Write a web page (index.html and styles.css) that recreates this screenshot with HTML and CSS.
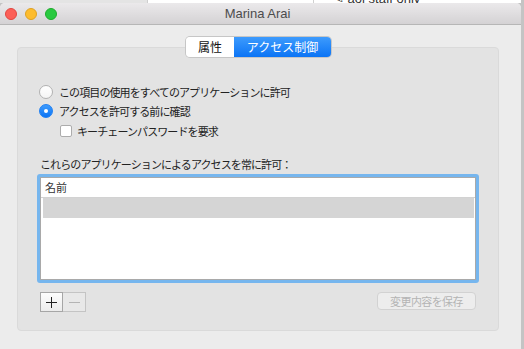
FILE: index.html
```html
<!DOCTYPE html>
<html lang="ja">
<head>
  <meta charset="UTF-8">
  <title>Marina Arai</title>
  <link rel="stylesheet" href="styles.css">
</head>
<body>
  <div class="desk">
    <div class="desk-left"></div>
    <div class="desk-mid"></div>
    <div class="desk-text">✎ aol staff only</div>
  </div>

  <div class="window">
    <div class="titlebar">
      <div class="lights">
        <span class="light red"></span>
        <span class="light yellow"></span>
        <span class="light green"></span>
      </div>
      <div class="title">Marina Arai</div>
    </div>

    <div class="content">
      <div class="tabs">
        <div class="tab">属性</div>
        <div class="tab active">アクセス制御</div>
      </div>

      <div class="group">
        <div class="row">
          <span class="radio"></span>
          <span class="label">この項目の使用をすべてのアプリケーションに許可</span>
        </div>
        <div class="row">
          <span class="radio on"></span>
          <span class="label">アクセスを許可する前に確認</span>
        </div>
        <div class="row sub">
          <span class="check"></span>
          <span class="label">キーチェーンパスワードを要求</span>
        </div>

        <div class="list-title">これらのアプリケーションによるアクセスを常に許可：</div>
        <div class="list">
          <div class="list-inner">
            <div class="list-head">名前</div>
            <div class="list-row"></div>
          </div>
        </div>

        <div class="actions">
          <div class="pm">
            <div class="pm-btn plus">
              <svg width="11" height="11" viewBox="0 0 11 11"><path d="M5.5 0V11M0 5.5H11" stroke="#222" stroke-width="1"/></svg>
            </div>
            <div class="pm-btn minus">
              <svg width="11" height="11" viewBox="0 0 11 11"><path d="M0 5.5H11" stroke="#b4b4b4" stroke-width="1"/></svg>
            </div>
          </div>
          <div class="save">変更内容を保存</div>
        </div>
      </div>
    </div>
  </div>
</body>
</html>
```

FILE: styles.css
```css
html, body {
  margin: 0;
  padding: 0;
  height: 349px;
  overflow: hidden;
}

body {
  background: #c4c4c4;
  font-family: "Noto Sans CJK JP", "Liberation Sans", sans-serif;
  position: relative;
}

/* what peeks out behind the window */
.desk {
  position: absolute;
  top: 0; left: 0;
  width: 521px;
  height: 3px;
  background: #ffffff;
}
.desk-left {
  position: absolute;
  left: 0; top: 0;
  width: 147px; height: 3px;
  background: #e4e4e4;
  border-right: 1px solid #cfcfcf;
}
.desk-mid {
  position: absolute;
  left: 313px; top: 0;
  width: 1px; height: 3px;
  background: #d0d0d0;
}
.desk-text {
  position: absolute;
  left: 333px; top: -9px;
  font-family: "Liberation Sans", sans-serif;
  font-size: 13px;
  color: #333;
}

.window {
  position: relative;
  margin-top: 3px;
  width: 521px;
  height: 346px;
  background: #ececec;
  border-radius: 5px 5px 0 0;
  overflow: hidden;
}

.titlebar {
  height: 21px;
  background: linear-gradient(#ebe9eb, #d4d2d4);
  border-bottom: 1px solid #b6b6b6;
  display: flex;
  align-items: center;
  position: relative;
}

.lights {
  display: flex;
  gap: 8px;
  padding-left: 5px;
  margin-top: 1px;
}
.light {
  width: 12px;
  height: 12px;
  border-radius: 50%;
  box-sizing: border-box;
}
.red { background: #fc5f57; border: 1px solid #e14640; }
.yellow { background: #fdbc2e; border: 1px solid #dea123; }
.green { background: #29c940; border: 1px solid #1eac2c; }

.title {
  position: absolute;
  left: 0; right: 6px;
  top: 3px;
  text-align: center;
  font-family: "Liberation Sans", sans-serif;
  font-size: 13px;
  color: #4c4c4c;
}

.content {
  padding: 12px 0 0 17px;
}

.tabs {
  position: relative;
  z-index: 1;
  display: flex;
  width: 145px;
  height: 20px;
  margin-left: 169px;
  border-radius: 4px;
  box-shadow: 0 0 0 1px #c6c6c6;
  overflow: hidden;
  font-size: 12px;
}
.tab {
  width: 48px;
  background: #ffffff;
  color: #111;
  display: flex;
  align-items: center;
  justify-content: center;
  line-height: 1;
}
.tab.active {
  width: 97px;
  background: linear-gradient(#3d9bfd, #0b74f5);
  color: #ffffff;
}

.group {
  margin-top: -10px;
  width: 480px;
  height: 282px;
  box-sizing: content-box;
  border: 1px solid #dadada;
  border-radius: 4px;
  background: #e3e3e3;
  padding: 0;
}

.row {
  display: flex;
  align-items: center;
  height: 19px;
  margin-left: 21px;
  font-size: 11px;
  letter-spacing: -0.9px;
  color: #222;
}
.row:first-child { margin-top: 34px; }
.row.sub {
  height: 20px;
  margin-top: 1px;
  margin-left: 42px;
}

.radio {
  width: 14px;
  height: 14px;
  box-sizing: border-box;
  border-radius: 50%;
  border: 1px solid #b2b2b2;
  background: linear-gradient(#ffffff, #f4f4f4);
  margin-right: 6px;
  position: relative;
}
.radio.on {
  border-color: #1f7ff2;
  background: linear-gradient(#3d9bfd, #0b74f5);
}
.radio.on::after {
  content: "";
  position: absolute;
  left: 4px; top: 4px;
  width: 4px; height: 4px;
  border-radius: 50%;
  background: #fff;
}

.check {
  width: 12px;
  height: 12px;
  box-sizing: border-box;
  border: 1px solid #acacac;
  border-radius: 2px;
  background: #fff;
  margin-right: 5px;
}

.list-title {
  margin: 15px 0 0 22px;
  height: 17px;
  line-height: 17px;
  font-size: 11px;
  letter-spacing: -0.9px;
  color: #222;
}

.list {
  margin: 1px 0 0 19px;
  width: 442px;
  height: 109px;
  box-sizing: border-box;
  border: 3px solid #76b6ee;
  border-radius: 3px;
}
.list-inner {
  height: 100%;
  box-sizing: border-box;
  border: 1px solid #a9a9a9;
  background: #ffffff;
}
.list-head {
  height: 19px;
  line-height: 19px;
  padding-left: 4px;
  font-size: 11px;
  color: #333;
  border-bottom: 1px solid #d2d2d2;
}
.list-row {
  margin: 0 1px 0 2px;
  height: 20px;
  background: #d5d5d5;
}

.actions {
  display: flex;
  justify-content: space-between;
  align-items: flex-start;
  margin: 9px 22px 0 22px;
}

.pm { display: flex; }
.pm-btn {
  width: 23px;
  height: 20px;
  box-sizing: border-box;
  display: flex;
  align-items: center;
  justify-content: center;
}
.plus {
  border: 1px solid #a6a6a6;
  background: linear-gradient(#fdfdfd, #ececec);
}
.minus {
  border: 1px solid #c4c4c4;
  border-left: none;
  background: #e8e8e8;
}

.save {
  width: 99px;
  height: 18px;
  box-sizing: border-box;
  border: 1px solid #d2d2d2;
  border-radius: 4px;
  background: #ededed;
  color: #b4b4b4;
  font-size: 11px;
  letter-spacing: -0.6px;
  text-align: center;
  line-height: 16px;
}
```
